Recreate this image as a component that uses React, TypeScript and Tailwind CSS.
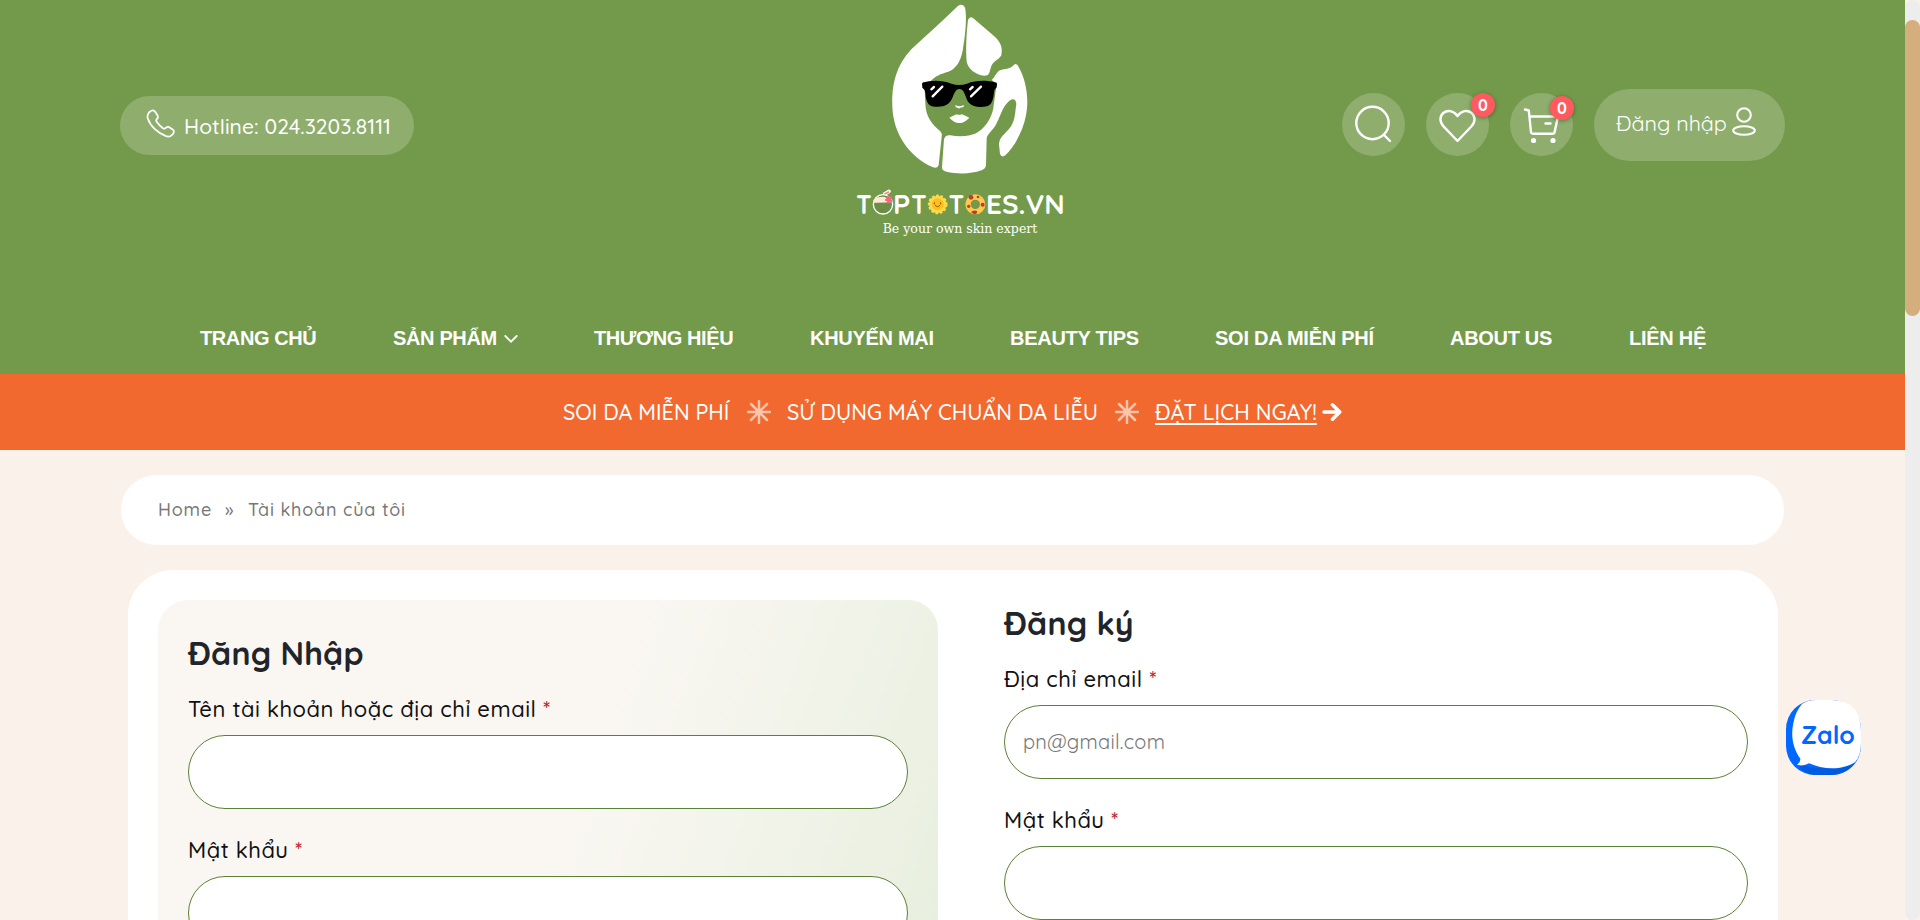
import React from "react";

function Logo() {
  return (
    <svg className="h-[250px] w-[240px]" viewBox="0 0 720 750" fill="#fff">
      <path d="M353 19C362 11 373 14 376 27C381 62 375 110 368 152C362 184 348 206 325 215C303 221 284 229 272 243L250 247L254 268L256 310C257 350 275 372 301 394Q307 400 305 410L296 495Q293 507 279 502C205 468 160 400 157 320C154 255 168 197 214 148C262 104 310 60 353 19Z" />
      <path d="M384 60Q389 47 399 54L462 108C480 124 489 140 484 166C477 180 458 182 452 204C448 220 447 227 433 227C407 224 385 207 380 185C377 150 379 100 384 60Z" />
      <path d="M519 197Q527 187 534 197C561 243 567 300 558 346C549 393 525 437 496 466Q485 474 480 462L477 432C479 410 494 403 507 387C527 365 525 335 529 312C528 293 514 293 501 310C484 328 481 353 466 377C457 392 441 402 440 416L438 496Q437 506 425 511C391 523 350 522 319 515Q305 511 306 501L312 418Q316 404 331 406C350 410 371 410 390 406C432 398 459 350 461 316L470 251L455 240C466 231 468 217 480 211C496 204 508 209 519 197Z" />
      <path fill="#000" d="M246 251Q248 247 253 247C279 240 306 241 334 251Q357 259 381 251C407 241 437 240 464 247Q470 247 471 251L470 262Q462 269 462 278C459 309 450 320 431 320C402 323 386 316 378 292C373 277 368 267 358 267C347 267 343 280 338 292C329 315 312 322 286 320C266 320 258 308 256 278Q255 268 247 263Z" />
      <g stroke="#fff" strokeWidth="7" strokeLinecap="round">
        <path d="M274 268L282 261M278 289L307 260M390 268L398 261M393 289L423 260" />
      </g>
      <path d="M345 316Q358 321 373 316Q370 325 363 322Q358 328 353 323Q347 325 345 316ZM328 353Q340 347 350 343Q358 346 366 343Q378 348 388 353Q372 370 358 369Q344 370 328 353Z" />

      <g fontFamily="'Quicksand', 'Lato', sans-serif" fontWeight="700" fontSize="83">
        <text x="49" y="642" textLength="46" lengthAdjust="spacingAndGlyphs">T</text>
        <text x="159" y="642" textLength="52" lengthAdjust="spacingAndGlyphs">P</text>
        <text x="214" y="642" textLength="46" lengthAdjust="spacingAndGlyphs">T</text>
        <text x="326" y="642" textLength="46" lengthAdjust="spacingAndGlyphs">T</text>
        <text x="438" y="642" textLength="236" lengthAdjust="spacingAndGlyphs">ES.VN</text>
      </g>

      <path d="M128 598L134 582L147 574" fill="none" stroke="#fff" strokeWidth="11" strokeLinecap="round" />
      <path d="M128 598L134 582L147 575" fill="none" stroke="#ef8d6b" strokeWidth="5" />
      <circle cx="129" cy="613" r="29" fill="#6b8d45" stroke="#fff" strokeWidth="4" />
      <path d="M99 608Q100 593 116 592Q131 588 141 595L159 602V606Q129 609 99 608Z" fill="#ffe9d3" />
      <path d="M145 586l4 6 7-1-3 7 4 6-8 0-4 6-3-7-7-3 6-4z" fill="#ff5f83" stroke="#ff5f83" strokeWidth="3" />

      <circle cx="293" cy="613" r="26" fill="#fdd94c" stroke="#fdd94c" strokeWidth="7" strokeDasharray="8 5" />
      <circle cx="293" cy="613" r="18" fill="#fcbf1e" />
      <path d="M283 608v3M302 608v3M285 615Q293 626 300 615" fill="none" stroke="#8e5a10" strokeWidth="3" strokeLinecap="round" />

      <circle cx="406" cy="613" r="22" fill="none" stroke="#fdc94f" strokeWidth="16" />
      <g fill="#c9342c">
        <circle cx="393" cy="592" r="7" /><circle cx="414" cy="591" r="4" /><circle cx="428" cy="614" r="6" /><circle cx="386" cy="619" r="5" /><path d="M393 637Q401 628 412 634L409 642Q400 644 393 637Z" />
      </g>

      <text x="128" y="699" fontFamily="'DejaVu Serif', serif" fontSize="36" textLength="464" lengthAdjust="spacingAndGlyphs">Be your own skin expert</text>
    </svg>
  );
}

function Phone() {
  return (
    <svg className="h-[30px] w-[30px]" viewBox="0 0 30 30" fill="none" stroke="#fff" strokeWidth="1.8" strokeLinejoin="round">
      <path d="M3 3.5Q7 -0.5 9.300 3L11.600 6.600Q12.500 8.500 10.900 10Q9.700 11.200 10.700 12.800Q13.200 16.500 17 19.300Q18.600 20.200 19.800 18.900Q21.300 17.400 23.200 18.200L26.600 20.400Q29.500 22.600 26 26Q23.700 28.400 20 27.200C12 24.300 4.500 17.500 1.700 9.200Q0.900 6 3 3.500Z" />
    </svg>
  );
}

function Badge({ className }: { className: string }) {
  return (
    <span className={`absolute flex size-6 items-center justify-center rounded-full bg-[#ff5a5f] text-base font-bold leading-none shadow-[0_1px_4px_rgba(0,0,0,0.35)] ${className}`}>0</span>
  );
}

function Star() {
  return (
    <svg className="size-6" viewBox="0 0 24 24" stroke="#fbc5ad" strokeWidth="2.5" strokeLinecap="round">
      <path d="M12 1v22M1 12h22M4 4l16 16M20 4L4 20" />
    </svg>
  );
}

function Field({ label, spacing, placeholder }: { label: string; spacing: string; placeholder?: string }) {
  return (
    <label className={`block ${spacing}`}>
      <span className="block h-8 whitespace-nowrap text-[22px] font-medium leading-8 tracking-[0.53px] text-[#111]">
        {label} <span className="text-[#b3202c]">*</span>
      </span>
      <input
        placeholder={placeholder}
        className="mt-2.5 block h-[74px] w-full rounded-full border border-[#5b8136] bg-white px-[18px] pb-0.5 text-xl font-normal tracking-[0.25px] placeholder:text-[#777]"
      />
    </label>
  );
}

const circle = "relative flex size-[63px] items-center justify-center rounded-full bg-[#8fae6e]";

export default function App() {
  return (
    <div className="flex h-[920px] w-[1920px] overflow-hidden bg-[#f9f1ea] font-['Quicksand','Lato',sans-serif] font-medium">
      <div className="relative w-[1905px]">
        <header className="h-[374px] bg-[#739a4a] text-white">
          <div className="flex h-[276px]">
            <div className="w-[840px] pl-[120px] pt-24">
              <a className="flex h-[59px] w-[294px] items-center rounded-full bg-[#8fae6e] pl-[26px]">
                <span className="-mt-1"><Phone /></span>
                <span className="ml-2 mt-0.5 whitespace-nowrap text-[21px] tracking-[0.06px]">Hotline: 024.3203.8111</span>
              </a>
            </div>
            <Logo />
            <div className="flex items-start gap-[21px] pl-[262px] pt-[93px]">
              <button className={circle}>
                <svg className="size-10" viewBox="0 0 40 40" fill="none" stroke="#fff" strokeWidth="2.4" strokeLinecap="round">
                  <circle cx="18.500" cy="18" r="16.200" />
                  <path d="M30 30L36 36" />
                </svg>
              </button>
              <button className={circle}>
                <svg className="size-10" viewBox="0 0 40 40" fill="none" stroke="#fff" strokeWidth="2.4" strokeLinejoin="round">
                  <path d="M19.500 36L5.500 21.300C1.200 16.700 1.800 11 5.300 8C9.500 4.500 15.500 5.500 19.500 11C23.500 5.500 29.500 4.500 33.700 8C37.200 11 37.800 16.700 33.500 21.300Z" />
                </svg>
                <Badge className="left-[45px] top-0" />
              </button>
              <button className={circle}>
                <svg className="size-10" viewBox="0 0 40 40" fill="none" stroke="#fff" strokeWidth="2.4" strokeLinecap="round" strokeLinejoin="round">
                  <path d="M3 4.500L6.800 5.500L9 27Q9.200 28.700 11 28.700H30.500Q32.300 28.700 32.600 27L36 11.500H7.500M23.500 18.500H28.500" />
                  <circle cx="11.500" cy="35.500" r="2.600" fill="#fff" stroke="none" />
                  <circle cx="31" cy="35.500" r="2.600" fill="#fff" stroke="none" />
                </svg>
                <Badge className="left-10 top-[3px]" />
              </button>
              <button className="-mt-1 flex h-[72px] w-[191px] items-center rounded-full bg-[#8fae6e] pb-[3px] pl-[22px]">
                <span className="w-[112px] whitespace-nowrap text-left text-[21.5px] font-normal">Đăng nhập</span>
                <svg className="-mt-[3px] ml-1 h-[30px] w-6" viewBox="0 0 24 30" fill="none" stroke="#fff" strokeWidth="2">
                  <circle cx="12" cy="8" r="6.800" />
                  <ellipse cx="12" cy="23.500" rx="10.800" ry="4.300" />
                </svg>
              </button>
            </div>
          </div>
          <nav className="flex h-[98px] whitespace-nowrap pl-[200px] text-xl font-bold tracking-[-0.35px] font-['Liberation_Sans',Arial,sans-serif]">
            <a className="mt-12 w-[193px] tracking-[-0.4px]">TRANG CHỦ</a>
            <a className="mt-12 flex w-[201px]">
              SẢN PHẨM
              <svg className="ml-[7px] mt-[9px] h-3 w-[14px]" viewBox="0 0 14 12" fill="none" stroke="#fff" strokeWidth="1.800" strokeLinecap="round"><path d="M1.300 3L7 8.700L12.700 3" /></svg>
            </a>
            <a className="mt-12 w-[216px] tracking-[-0.4px]">THƯƠNG HIỆU</a>
            <a className="mt-12 w-[200px] tracking-[-0.3px]">KHUYẾN MẠI</a>
            <a className="mt-12 w-[205px] tracking-[-0.28px]">BEAUTY TIPS</a>
            <a className="mt-12 w-[235px] tracking-[-0.25px]">SOI DA MIỄN PHÍ</a>
            <a className="mt-12 w-[179px] tracking-[-0.3px]">ABOUT US</a>
            <a className="mt-12 tracking-[-0.25px]">LIÊN HỆ</a>
          </nav>
        </header>

        <div className="flex h-[76px] items-center whitespace-nowrap bg-[#f2692f] pl-[563px] text-[21.5px] text-white">
          <span className="w-[184px]">SOI DA MIỄN PHÍ</span>
          <Star />
          <span className="ml-4 w-[328px] tracking-[0.03px]">SỬ DỤNG MÁY CHUẨN DA LIỄU</span>
          <Star />
          <span className="ml-4 w-[167px]">
            <a className="tracking-[0.12px] underline decoration-2 underline-offset-[3px]">ĐẶT LỊCH NGAY!</a>
          </span>
          <svg className="h-5 w-5" viewBox="0 0 20 20" fill="none" stroke="#fff" strokeWidth="3.600" strokeLinecap="round" strokeLinejoin="round"><path d="M2 10H17M10.500 2.800L17.700 10L10.500 17.200" /></svg>
        </div>

        <div className="ml-[121px] mt-[25px] flex h-[70px] w-[1663px] items-center rounded-full bg-white pb-0.5 pl-[37px] text-[18px] tracking-[0.82px] text-[#777]">
          <span className="w-[67px]">Home</span>
          <span className="w-[23px]">»</span>
          <span>Tài khoản của tôi</span>
        </div>

        <main className="ml-32 mt-[25px] flex h-[350px] w-[1650px] overflow-hidden rounded-t-[45px] bg-white pl-[30px] pt-[30px]">
          <section className="h-[500px] w-[780px] shrink-0 rounded-[30px] bg-[linear-gradient(110deg,#faf7f2_0%,#faf7f2_50%,#e6eedc_100%)] px-[30px] pt-[33px]">
            <h2 className="h-10 text-[32px] font-bold leading-10 tracking-[0.2px] text-[#212529]">Đăng Nhập</h2>
            <Field label="Tên tài khoản hoặc địa chỉ email" spacing="mt-5" />
            <Field label="Mật khẩu" spacing="mt-[25px]" />
          </section>
          <section className="ml-[66px] w-[744px] shrink-0 pt-[3px]">
            <h2 className="h-10 text-[32px] font-bold leading-10 tracking-[0.2px] text-[#212529]">Đăng ký</h2>
            <Field label="Địa chỉ email" spacing="mt-5" placeholder="pn@gmail.com" />
            <Field label="Mật khẩu" spacing="mt-[25px]" />
          </section>
        </main>

        <a className="absolute left-[1786px] top-[700px]">
          <svg className="size-[75px]" viewBox="0 0 225 225">
            <rect width="225" height="225" rx="88" fill="#0068ff" />
            <path d="M35 192Q80 206 130 206T209 187Q180 224 137 225H88Q55 224 35 192Z" fill="#005be0" />
            <path d="M48 12Q65 0 90 0H137Q225 2 225 92V130Q225 168 207 187C165 213 110 208 69 190Q52 200 33 194Q44 186 43 176C20 145 14 105 22 70Q28 35 48 12Z" fill="#fff" />
            <text x="45" y="131" fontFamily="'Quicksand', 'Lato', sans-serif" fontWeight="700" fontSize="78" textLength="161" lengthAdjust="spacingAndGlyphs" fill="#0068ff">Zalo</text>
          </svg>
        </a>
      </div>
      <div className="h-[920px] w-[15px] rounded-full bg-[#ededed] pt-5">
        <div className="h-[296px] rounded-full bg-[#d4ae7d]" />
      </div>
    </div>
  );
}
